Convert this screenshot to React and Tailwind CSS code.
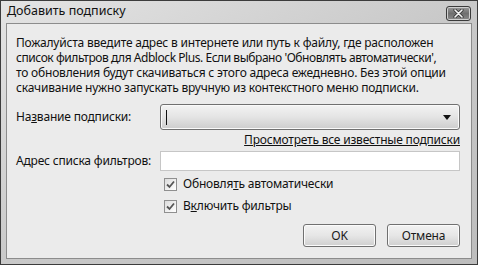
import React from "react";

const font = { fontFamily: '"Noto Sans", "Open Sans", sans-serif' };

const CheckRow = ({ hotkey, rest, before }) => (
  <div className="flex items-center gap-[6px] h-[20px]">
    <span className="w-[13px] h-[13px] border border-[#8f8f8f] bg-gradient-to-br from-[#dcdcdc] to-[#ffffff] flex items-center justify-center">
      <svg width="9" height="9" viewBox="0 0 9 9">
        <path d="M1 4.5 L3.5 7 L8 1.5" fill="none" stroke="#555" strokeWidth="1.8" />
      </svg>
    </span>
    <span>
      {before}
      <span className="underline">{hotkey}</span>
      {rest}
    </span>
  </div>
);

const Button = ({ children }) => (
  <button className="w-[73px] h-[23px] rounded-[3px] border border-[#707070] bg-gradient-to-b from-[#f2f2f2] via-[#e6e6e6] to-[#cfcfcf] text-[12px] text-[#1a1a1a] shadow-[inset_0_0_0_1px_#fbfbfb]">
    {children}
  </button>
);

export default function App() {
  return (
    <div className="w-[478px] h-[265px] bg-[#3c3c3c] p-px text-[12px] text-[#111] tracking-[-0.2px]" style={font}>
      <div className="h-full flex flex-col bg-gradient-to-br from-[#e4e4e4] via-[#c9c9c9] to-[#bdbdbd]">
        {/* title bar */}
        <div className="h-[21px] flex items-center justify-between pl-[6px] pr-[6px]">
          <span className="text-[12.5px] text-[#111] tracking-normal">Добавить подписку</span>
          <div className="w-[25px] h-[15px] mt-[4px] rounded-[3px] border border-[#3a3a3a] bg-gradient-to-b from-[#9a9a9a] via-[#6f6f6f] to-[#8a8a8a] flex items-center justify-center shadow-[inset_0_0_0_1px_#cfcfcf]">
            <svg width="11" height="9" viewBox="0 0 11 9">
              <path d="M2 1 L9 8 M9 1 L2 8" stroke="#3a3a3a" strokeWidth="3.2" strokeLinecap="round" />
              <path d="M2 1 L9 8 M9 1 L2 8" stroke="#f4f4f4" strokeWidth="1.6" strokeLinecap="round" />
            </svg>
          </div>
        </div>
        {/* body */}
        <div className="flex-1 mx-[5px] mt-px mb-[5px] border border-[#8c8c8c] bg-[#ebebeb] flex flex-col pl-[9px] pr-[11px] pt-[11px]">
          <p className="leading-[15px] whitespace-nowrap">
            Пожалуйста введите адрес в интернете или путь к файлу, где расположен
            <br />
            <span className="tracking-[-0.45px]">список фильтров для Adblock Plus. Если выбрано 'Обновлять автоматически',</span>
            <br />
            то обновления будут скачиваться с этого адреса ежедневно. Без этой опции
            <br />
            скачивание нужно запускать вручную из контекстного меню подписки.
          </p>
          <div className="flex items-center mt-[9px]">
            <span className="w-[144px]">
              На<span className="underline">з</span>вание подписки:
            </span>
            <div className="flex-1 h-[26px] rounded-[3px] border border-[#707070] bg-gradient-to-b from-[#f3f3f3] via-[#e4e4e4] to-[#cdcdcd] flex items-center pl-[5px] pr-[8px] shadow-[inset_0_0_0_1px_#fafafa]">
              <span className="w-px h-[15px] bg-[#111]" />
              <span className="ml-auto">
                <svg width="8" height="5" viewBox="0 0 8 5">
                  <path d="M0 0 H8 L4 5 Z" fill="#111" />
                </svg>
              </span>
            </div>
          </div>
          <div className="flex justify-end mt-[2px] h-[16px] items-center">
            <span className="underline">Просмотреть все известные подписки</span>
          </div>
          <div className="flex items-center mt-[3px]">
            <span className="w-[144px]">Адрес списка фильтров:</span>
            <div className="flex-1 h-[20px] border border-[#c6c6c6] bg-white" />
          </div>
          <div className="pl-[148px] mt-[3px] flex flex-col gap-[2px]">
            <CheckRow before="Обновля" hotkey="т" rest="ь автоматически" />
            <CheckRow before="В" hotkey="к" rest="лючить фильтры" />
          </div>
          <div className="flex justify-end gap-[11px] mt-[8px]">
            <Button>OK</Button>
            <Button>Отмена</Button>
          </div>
        </div>
      </div>
    </div>
  );
}
